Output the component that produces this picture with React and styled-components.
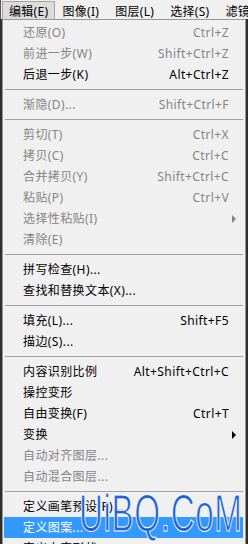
import React from 'react';
import styled, { createGlobalStyle } from 'styled-components';

const GlobalStyle = createGlobalStyle`
	html, body {
		margin: 0;
		padding: 0;
		background: #2e2e2e;
		overflow: hidden;
	}
	body {
		font-family: 'Noto Sans', 'Noto Sans CJK SC', sans-serif;
	}
`;

const Page = styled.div`
	width: 248px;
	height: 544px;
	display: flex;
	flex-direction: column;
	overflow: hidden;
`;

const MenuBar = styled.div`
	height: 19px;
	display: flex;
	align-items: stretch;
	background: #f0f0f0;
	padding-left: 1px;
	border-left: 1px solid #555;
	box-sizing: border-box;
`;

const BarItem = styled.div`
	display: flex;
	align-items: center;
	padding: 0 ${(p) => (p.active ? '6px' : '8px')} 0 6px;
	margin-top: 1px;
	font-size: 12px;
	letter-spacing: 0.3px;
	color: #000;
	white-space: nowrap;
	border: 1px solid ${(p) => (p.active ? '#a3a3a3' : 'transparent')};
	border-bottom: none;
	background: ${(p) => (p.active ? '#dcdcdc' : 'transparent')};
`;

const Dropdown = styled.div`
	position: relative;
	margin-left: 2px;
	width: 244px;
	flex: 1;
	box-sizing: border-box;
	background: #f0f0f0;
	border: 1px solid #979797;
	padding-top: 2px;
`;

const Row = styled.div`
	height: 21px;
	margin: 0 2px 0 1px;
	padding: 0 2px 0 19px;
	display: grid;
	grid-template-columns: 1fr auto 12px;
	align-items: center;
	font-size: 12px;
	line-height: 21px;
	letter-spacing: 0.4px;
	white-space: nowrap;
	color: ${(p) => (p.highlight ? '#fff' : p.disabled ? '#858585' : '#000')};
	background: ${(p) => (p.highlight ? '#3399ff' : 'transparent')};
`;

const Shortcut = styled.span`
	text-align: right;
`;

const Arrow = styled.span`
	width: 0;
	height: 0;
	margin-left: 3px;
	border-top: 4px solid transparent;
	border-bottom: 4px solid transparent;
	border-left: 4px solid ${(p) => (p.disabled ? '#858585' : '#000')};
`;

const Separator = styled.div`
	height: 9px;
	margin: 0 2px;
	display: flex;
	align-items: center;
	&::after {
		content: '';
		flex: 1;
		height: 1px;
		background: #a0a0a0;
	}
`;

const Watermark = styled.div`
	position: absolute;
	left: 76px;
	top: 468px;
	font-family: 'Liberation Sans', sans-serif;
	font-size: 51px;
	line-height: 51px;
	letter-spacing: 1px;
	color: #1f63d6;
	-webkit-text-stroke: 1px #ffffff;
	transform: scaleX(0.65);
	transform-origin: left top;
	pointer-events: none;
	white-space: nowrap;
`;

const barItems = ['编辑(E)', '图像(I)', '图层(L)', '选择(S)', '滤镜(T)'];

const menu = [
	{ label: '还原(O)', key: 'Ctrl+Z', disabled: true },
	{ label: '前进一步(W)', key: 'Shift+Ctrl+Z', disabled: true },
	{ label: '后退一步(K)', key: 'Alt+Ctrl+Z' },
	'-',
	{ label: '渐隐(D)...', key: 'Shift+Ctrl+F', disabled: true },
	'-',
	{ label: '剪切(T)', key: 'Ctrl+X', disabled: true },
	{ label: '拷贝(C)', key: 'Ctrl+C', disabled: true },
	{ label: '合并拷贝(Y)', key: 'Shift+Ctrl+C', disabled: true },
	{ label: '粘贴(P)', key: 'Ctrl+V', disabled: true },
	{ label: '选择性粘贴(I)', disabled: true, sub: true },
	{ label: '清除(E)', disabled: true },
	'-',
	{ label: '拼写检查(H)...' },
	{ label: '查找和替换文本(X)...' },
	'-',
	{ label: '填充(L)...', key: 'Shift+F5' },
	{ label: '描边(S)...' },
	'-',
	{ label: '内容识别比例', key: 'Alt+Shift+Ctrl+C' },
	{ label: '操控变形' },
	{ label: '自由变换(F)', key: 'Ctrl+T' },
	{ label: '变换', sub: true },
	{ label: '自动对齐图层...', disabled: true },
	{ label: '自动混合图层...', disabled: true },
	'-',
	{ label: '定义画笔预设(P)...' },
	{ label: '定义图案...', highlight: true },
	{ label: '定义自定形状...' },
];

const App = () => (
	<Page>
		<GlobalStyle />
		<MenuBar>
			{barItems.map((item, i) => (
				<BarItem key={item} active={i === 0}>
					{item}
				</BarItem>
			))}
		</MenuBar>
		<Dropdown>
			{menu.map((item, i) =>
				item === '-' ? (
					<Separator key={i} />
				) : (
					<Row key={i} disabled={item.disabled} highlight={item.highlight}>
						<span>{item.label}</span>
						<Shortcut>{item.key || ''}</Shortcut>
						{item.sub ? <Arrow disabled={item.disabled} /> : <span />}
					</Row>
				)
			)}
			<Watermark>UiBQ.CoM</Watermark>
		</Dropdown>
	</Page>
);

export default App;
